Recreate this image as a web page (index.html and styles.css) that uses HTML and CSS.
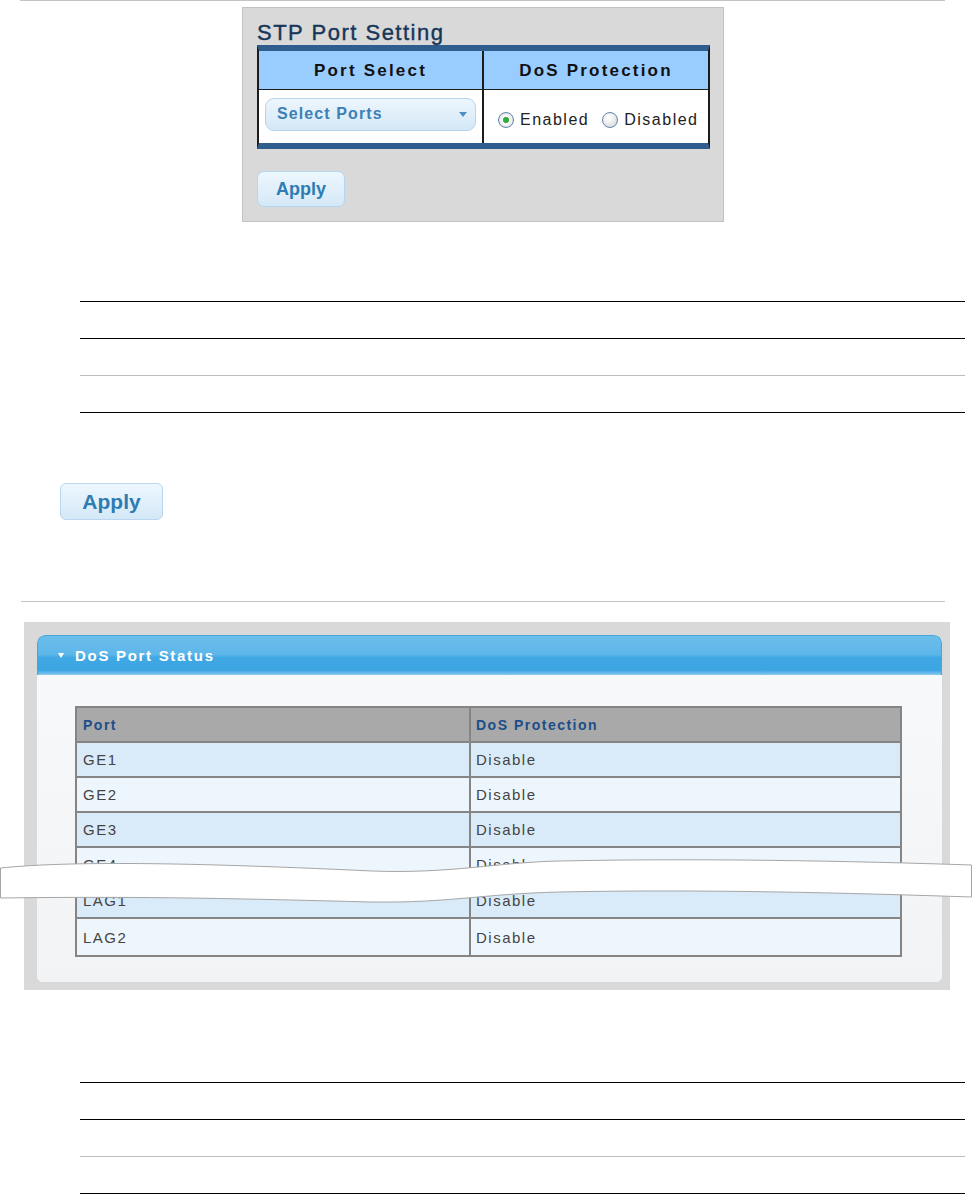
FILE: index.html
```html
<!DOCTYPE html>
<html lang="en">
<head>
<meta charset="utf-8">
<title>DoS Port Setting</title>
<link rel="stylesheet" href="styles.css">
</head>
<body>
<div class="rule-top"></div>

<section class="stp-panel">
  <h2 class="stp-title">STP Port Setting</h2>
  <div class="stp-table">
    <div class="stp-th stp-col1">Port Select</div>
    <div class="stp-th">DoS Protection</div>
    <div class="stp-td stp-col1 sel-cell">
      <div class="select">Select Ports<span class="caret"></span></div>
    </div>
    <div class="stp-td radios">
      <span class="radio checked"></span><span class="rlabel">Enabled</span>
      <span class="radio"></span><span class="rlabel">Disabled</span>
    </div>
  </div>
  <button class="btn-apply">Apply</button>
</section>

<div class="rules rules-1">
  <div class="rule-row"></div>
  <div class="rule-row"></div>
  <div class="rule-row gray last"></div>
</div>

<button class="btn-apply big">Apply</button>

<div class="rule-mid"></div>

<section class="status-wrap">
  <div class="status-panel">
    <div class="status-head"><span class="tri"></span>DoS Port Status</div>
    <div class="status-body">
      <table class="status-table">
        <thead>
          <tr><th class="c1">Port</th><th class="c2">DoS Protection</th></tr>
        </thead>
        <tbody>
          <tr class="odd"><td class="c1">GE1</td><td class="c2">Disable</td></tr>
          <tr class="even"><td class="c1">GE2</td><td class="c2">Disable</td></tr>
          <tr class="odd"><td class="c1">GE3</td><td class="c2">Disable</td></tr>
          <tr class="even"><td class="c1">GE4</td><td class="c2">Disable</td></tr>
          <tr class="odd tall1"><td class="c1">LAG1</td><td class="c2">Disable</td></tr>
          <tr class="even tall2"><td class="c1">LAG2</td><td class="c2">Disable</td></tr>
        </tbody>
      </table>
    </div>
  </div>
  <svg class="break" width="972" height="52" viewBox="0 0 972 52" aria-hidden="true">
    <path d="M0.5,16 C60,10 160,9 372,19 C450,22 500,10 560,9 C700,6 850,9 971.5,13 L971.5,45 C850,41 700,37 560,40 C480,42 450,51 372,50 C250,47 150,44 0.5,46 Z" fill="#ffffff" stroke="#a6a6a6" stroke-width="1"/>
  </svg>
</section>

<div class="rules rules-2">
  <div class="rule-row"></div>
  <div class="rule-row"></div>
  <div class="rule-row gray last"></div>
</div>
</body>
</html>
```

FILE: styles.css
```css
* { box-sizing: border-box; }

body {
  margin: 0;
  background: #ffffff;
  font-family: "Liberation Sans", Arial, sans-serif;
}

.rule-top {
  margin-left: 20px;
  width: 925px;
  height: 0;
  border-top: 1px solid #c4c4c4;
}

/* ---------- STP panel ---------- */
.stp-panel {
  margin: 6px 0 0 242px;
  width: 482px;
  height: 215px;
  background: #d9d9d9;
  border: 1px solid #c2c2c2;
  padding: 12px 13px 0 14px;
}

.stp-title {
  margin: 0;
  height: 25px;
  font-size: 22px;
  line-height: 25px;
  font-weight: normal;
  letter-spacing: 1.5px;
  color: #173657;
  -webkit-text-stroke: 0.4px #173657;
}

.stp-table {
  width: 453px;
  display: grid;
  grid-template-columns: 225px 1fr;
  border-top: 6px solid #2f5e8e;
  border-bottom: 6px solid #2f5e8e;
  border-left: 2px solid #1c1c1c;
  border-right: 2px solid #1c1c1c;
}

.stp-th {
  height: 39px;
  background: #99ccff;
  border-bottom: 1px solid #1c1c1c;
  display: flex;
  align-items: center;
  justify-content: center;
  padding-top: 1px;
  font-weight: bold;
  font-size: 17px;
  letter-spacing: 2.2px;
  color: #111111;
}

.stp-col1 { border-right: 2px solid #1c1c1c; }

.stp-td {
  height: 53px;
  background: #ffffff;
}

.sel-cell { padding: 8px 0 0 6px; }

.select {
  width: 211px;
  height: 33px;
  border: 1px solid #b5d5ee;
  border-radius: 9px;
  background: linear-gradient(#edf6fd, #d4e8f7);
  display: flex;
  align-items: center;
  padding: 0 0 2px 11px;
  font-weight: bold;
  font-size: 16px;
  letter-spacing: 1.1px;
  color: #3c80b6;
}

.caret {
  margin-left: auto;
  margin-right: 8px;
  margin-top: 2px;
  width: 0;
  height: 0;
  border-left: 4.5px solid transparent;
  border-right: 4.5px solid transparent;
  border-top: 5px solid #4b8fc7;
}

.radios {
  display: flex;
  align-items: center;
  padding: 6px 0 0 14px;
}

.radio {
  width: 16px;
  height: 16px;
  border-radius: 50%;
  border: 1px solid #5f86b0;
  background: radial-gradient(circle at 40% 35%, #ffffff 0, #f2f2f2 35%, #cfcfcf 100%);
  flex: none;
}

.radio.checked {
  background: radial-gradient(circle, #2fae3c 0, #2fae3c 2.7px, #ffffff 3.5px, #f0f0f0 55%, #cfcfcf 100%);
}

.rlabel {
  margin-left: 6px;
  font-size: 16px;
  letter-spacing: 1.5px;
  color: #222222;
}

.rlabel + .radio { margin-left: 13px; }

.btn-apply {
  display: block;
  margin-top: 22px;
  width: 88px;
  height: 36px;
  padding: 0;
  border: 1px solid #b4d6ef;
  border-radius: 7px;
  background: linear-gradient(#eef7fe, #d4e8f7);
  font-family: inherit;
  font-weight: bold;
  font-size: 18px;
  color: #2f7bb3;
}

.btn-apply.big {
  margin: 70px 0 0 60px;
  width: 103px;
  height: 37px;
  font-size: 21px;
  border-radius: 6px;
  border-color: #b9d7ee;
}

/* ---------- rule tables ---------- */
.rules {
  margin-left: 80px;
  width: 885px;
}

.rules-1 { margin-top: 79px; }
.rules-2 { margin-top: 92px; }

.rule-row {
  height: 37px;
  border-top: 1px solid #000000;
}

.rule-row.gray { border-top-color: #bdbdbd; }

.rule-row.last {
  height: 38px;
  border-bottom: 1px solid #000000;
}

.rule-mid {
  margin: 81px 0 0 21px;
  width: 924px;
  height: 0;
  border-top: 1px solid #c4c4c4;
}

/* ---------- status panel ---------- */
.status-wrap {
  position: relative;
  margin: 20px 0 0 24px;
  width: 926px;
  height: 368px;
  background: #d9d9d9;
  padding: 13px 8px 8px 13px;
}

.status-panel {
  height: 100%;
  display: flex;
  flex-direction: column;
  border-radius: 8px 8px 6px 6px;
  overflow: hidden;
  background: #f4f6f8;
}

.status-head {
  height: 40px;
  flex: none;
  display: flex;
  align-items: center;
  padding-left: 20px;
  background: linear-gradient(#6bbeeb 0%, #5db6e9 48%, #40a8e3 55%, #3ba5e2 88%, #8ccbf0 100%);
  border: 1px solid #4ba3db;
  border-bottom: none;
  border-radius: 8px 8px 0 0;
  color: #ffffff;
  font-weight: bold;
  font-size: 15px;
  letter-spacing: 1.7px;
}

.tri {
  width: 0;
  height: 0;
  margin-right: 11px;
  border-left: 3.5px solid transparent;
  border-right: 3.5px solid transparent;
  border-top: 5px solid #ffffff;
}

.status-body {
  flex: 1;
  padding: 31px 0 0 38px;
  background: linear-gradient(#f7f9fb, #f1f3f5);
}

.status-table {
  width: 827px;
  table-layout: fixed;
  border-collapse: separate;
  border-spacing: 0;
  border-left: 2px solid #858585;
  border-top: 2px solid #858585;
}

.status-table th,
.status-table td {
  box-sizing: content-box;
  height: 33px;
  padding: 0 0 0 6px;
  border-right: 2px solid #858585;
  border-bottom: 2px solid #858585;
  text-align: left;
  vertical-align: middle;
}

.status-table .c1 { width: 386px; }
.status-table .c2 { padding-left: 5px; }

.status-table th {
  background: #a9a9a9;
  font-size: 14px;
  font-weight: bold;
  letter-spacing: 1.5px;
  color: #1d4e89;
}

.status-table td {
  font-size: 15px;
  letter-spacing: 1.5px;
  color: #444444;
}

.status-table tr.odd td { background: #d9eaf8; }
.status-table tr.even td { background: #eef6fd; }
.status-table tr.tall1 td { height: 34px; }
.status-table tr.tall2 td { height: 36px; }

.break {
  position: absolute;
  left: -24px;
  top: 230px;
}
```
